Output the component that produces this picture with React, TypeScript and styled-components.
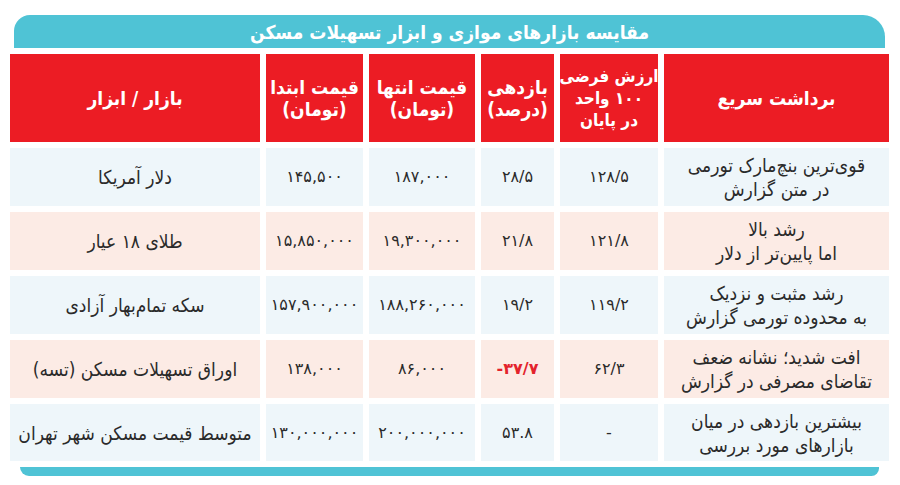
import React from "react";
import styled, { createGlobalStyle } from "styled-components";

const Global = createGlobalStyle`
  html, body { margin: 0; padding: 0; background: #ffffff; }
  body { font-family: "DejaVu Sans Condensed", "DejaVu Sans", sans-serif; }
`;

const Page = styled.div`
  width: 900px;
  height: 485px;
  box-sizing: border-box;
  padding: 15px 11px 0 10px;
  background: #ffffff;
  direction: rtl;
  display: flex;
  flex-direction: column;
`;

const TitleBar = styled.div`
  height: 33px;
  margin: 0 4px 6px 4px;
  background: #4fc3d5;
  border-radius: 16px 22px 0 0;
  color: #ffffff;
  font-weight: bold;
  font-size: 19px;
  display: flex;
  align-items: center;
  justify-content: center;
`;

const Table = styled.div`
  display: grid;
  grid-template-columns: 225px 98px 73px 106px 97px 250px;
  grid-template-rows: 88px repeat(4, 58px) 57px;
  gap: 6px;
`;

const HeadCell = styled.div<{ $size?: number }>`
  background: #ec1c24;
  color: #ffffff;
  font-size: ${(p) => p.$size ?? 19}px;
  font-weight: bold;
  line-height: 22px;
  display: flex;
  align-items: center;
  justify-content: center;
  text-align: center;
  white-space: nowrap;
  overflow: hidden;
`;

const Cell = styled.div<{ $tone: "blue" | "pink"; $num?: boolean; $neg?: boolean }>`
  background: ${(p) => (p.$tone === "blue" ? "#eef6fa" : "#fcebe5")};
  color: ${(p) => (p.$neg ? "#e3232c" : "#2a2a2a")};
  font-family: ${(p) => (p.$num ? '"DejaVu Sans", sans-serif' : "inherit")};
  font-weight: ${(p) => (p.$neg ? "bold" : "normal")};
  font-size: ${(p) => (p.$num ? "16px" : "19px")};
  line-height: 24px;
  direction: ${(p) => (p.$num ? "ltr" : "rtl")};
  display: flex;
  align-items: center;
  justify-content: center;
  text-align: center;
  white-space: nowrap;
`;

const BottomBar = styled.div`
  height: 9px;
  margin: 6px 10px 0 10px;
  background: #4fc3d5;
  border-radius: 0 0 10px 12px;
`;

type Row = {
  tone: "blue" | "pink";
  note: string[];
  value: string;
  ret: string;
  neg?: boolean;
  end: string;
  start: string;
  market: string;
};

const rows: Row[] = [
  {
    tone: "blue",
    note: ["قوی‌ترین بنچ‌مارک تورمی", "در متن گزارش"],
    value: "۱۲۸/۵",
    ret: "۲۸/۵",
    end: "۱۸۷,۰۰۰",
    start: "۱۴۵,۵۰۰",
    market: "دلار آمریکا",
  },
  {
    tone: "pink",
    note: ["رشد بالا", "اما پایین‌تر از دلار"],
    value: "۱۲۱/۸",
    ret: "۲۱/۸",
    end: "۱۹,۳۰۰,۰۰۰",
    start: "۱۵,۸۵۰,۰۰۰",
    market: "طلای ۱۸ عیار",
  },
  {
    tone: "blue",
    note: ["رشد مثبت و نزدیک", "به محدوده تورمی گزارش"],
    value: "۱۱۹/۲",
    ret: "۱۹/۲",
    end: "۱۸۸,۲۶۰,۰۰۰",
    start: "۱۵۷,۹۰۰,۰۰۰",
    market: "سکه تمام‌بهار آزادی",
  },
  {
    tone: "pink",
    note: ["افت شدید؛ نشانه ضعف", "تقاضای مصرفی در گزارش"],
    value: "۶۲/۳",
    ret: "-۳۷/۷",
    neg: true,
    end: "۸۶,۰۰۰",
    start: "۱۳۸,۰۰۰",
    market: "اوراق تسهیلات مسکن (تسه)",
  },
  {
    tone: "blue",
    note: ["بیشترین بازدهی در میان", "بازارهای مورد بررسی"],
    value: "-",
    ret: "۵۳.۸",
    end: "۲۰۰,۰۰۰,۰۰۰",
    start: "۱۳۰,۰۰۰,۰۰۰",
    market: "متوسط قیمت مسکن شهر تهران",
  },
];

const Lines = ({ lines }: { lines: string[] }) => (
  <div>
    {lines.map((l, i) => (
      <div key={i}>{l}</div>
    ))}
  </div>
);

export default function App() {
  return (
    <>
      <Global />
      <Page>
        <TitleBar>مقایسه بازارهای موازی و ابزار تسهیلات مسکن</TitleBar>
        <Table>
          <HeadCell>برداشت سریع</HeadCell>
          <HeadCell $size={17}>
            <Lines lines={["ارزش فرضی", "۱۰۰ واحد", "در پایان"]} />
          </HeadCell>
          <HeadCell>
            <Lines lines={["بازدهی", "(درصد)"]} />
          </HeadCell>
          <HeadCell>
            <Lines lines={["قیمت انتها", "(تومان)"]} />
          </HeadCell>
          <HeadCell>
            <Lines lines={["قیمت ابتدا", "(تومان)"]} />
          </HeadCell>
          <HeadCell>بازار / ابزار</HeadCell>
          {rows.map((r, i) => (
            <React.Fragment key={i}>
              <Cell $tone={r.tone}>
                <Lines lines={r.note} />
              </Cell>
              <Cell $tone={r.tone} $num>{r.value}</Cell>
              <Cell $tone={r.tone} $num $neg={r.neg}>{r.ret}</Cell>
              <Cell $tone={r.tone} $num>{r.end}</Cell>
              <Cell $tone={r.tone} $num>{r.start}</Cell>
              <Cell $tone={r.tone}>{r.market}</Cell>
            </React.Fragment>
          ))}
        </Table>
        <BottomBar />
      </Page>
    </>
  );
}
